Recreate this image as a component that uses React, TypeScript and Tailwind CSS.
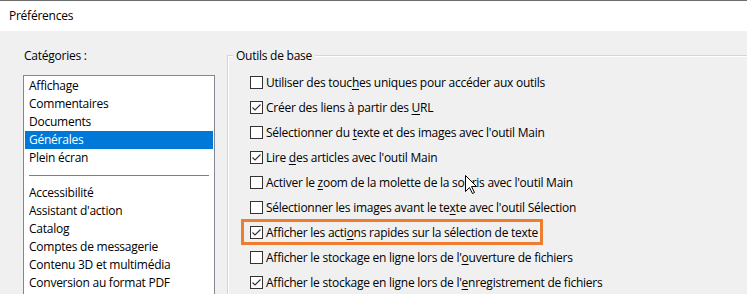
import React from "react"

const font = { fontFamily: '"Segoe UI", "Open Sans", "Noto Sans", sans-serif' }

type Opt = { label: React.ReactNode; checked: boolean; ring?: boolean }

function U({ children }: { children: React.ReactNode }) {
    return <span className="underline underline-offset-[2px] decoration-1">{children}</span>
}

const options: Opt[] = [
    { label: <>Utiliser des touc<U>h</U>es uniques pour accéder aux outils</>, checked: false },
    { label: <>Créer des liens à partir des <U>U</U>RL</>, checked: true },
    { label: <>Sélectionner du <U>t</U>exte et des images avec l'outil Main</>, checked: false },
    { label: <>Lire <U>d</U>es articles avec l'outil Main</>, checked: true },
    { label: <>Activer le <U>z</U>oom de la molette de la souris avec l'outil Main</>, checked: false },
    { label: <>Sélectionner les images avant le te<U>x</U>te avec l'outil Sélection</>, checked: false },
    { label: <>Afficher les acti<U>o</U>ns rapides sur la sélection de texte</>, checked: true, ring: true },
    { label: <>Afficher le stockage en ligne lors de l'<U>o</U>uverture de fichiers</>, checked: false },
    { label: <>Afficher le stockage en ligne lors de l'<U>e</U>nregistrement de fichiers</>, checked: true },
]

const topCats = ["Affichage", "Commentaires", "Documents", "Générales", "Plein écran"]
const moreCats = [
    "Accessibilité",
    "Assistant d'action",
    "Catalog",
    "Comptes de messagerie",
    "Contenu 3D et multimédia",
    "Conversion au format PDF",
]

function Checkbox({ checked }: { checked: boolean }) {
    return (
        <div className="w-[13px] h-[13px] border border-[#333333] bg-white shrink-0">
            {checked && (
                <svg width="11" height="11" viewBox="0 0 11 11">
                    <path d="M1.5 5.5 L4 8 L9.5 2.5" fill="none" stroke="#333" strokeWidth="1.1" />
                </svg>
            )}
        </div>
    )
}

function CatItem({ name }: { name: string }) {
    const sel = name === "Générales"
    return (
        <div
            className={`h-[18px] leading-[18px] pl-[4px] whitespace-nowrap ${
                sel ? "bg-[#0078d7] text-white" : "text-black"
            }`}
        >
            {name}
        </div>
    )
}

export default function App() {
    return (
        <div
            className="relative w-[747px] h-[294px] overflow-hidden bg-[#f0f0f0] text-[12px] tracking-[-0.25px] text-black"
            style={font}
        >
            {/* Title bar */}
            <div className="h-[31px] bg-white border-t border-[#6e6e6e] flex items-center pl-[9px]">
                Préférences
            </div>

            <div className="flex">
                {/* Categories */}
                <div className="w-[227px] shrink-0 pl-[23px] pt-[17px]">
                    <div className="h-[16px] leading-[16px] pl-px">Catégories :</div>
                    <div className="mt-[11px] w-[192px] h-[240px] border border-[#828790] bg-white p-px">
                        {topCats.map((c) => (
                            <CatItem key={c} name={c} />
                        ))}
                        <div className="h-[17px] flex items-center px-[4px]">
                            <div className="h-px w-full bg-[#3a8fd8]" />
                        </div>
                        {moreCats.map((c) => (
                            <CatItem key={c} name={c} />
                        ))}
                    </div>
                </div>

                {/* Outils de base */}
                <div className="relative mt-[24px] flex-1 h-[300px] border-l border-t border-[#d5d5d5] shadow-[inset_1px_1px_0_#ffffff] pl-[22px] pt-[14px]">
                    <span className="absolute -top-[8px] left-[5px] px-[3px] h-[16px] leading-[16px] bg-[#f0f0f0]">
                        Outils de base
                    </span>
                    {options.map((o, i) => (
                        <div key={i} className="relative h-[25px] flex items-center gap-[3px] whitespace-nowrap">
                            <Checkbox checked={o.checked} />
                            <span>{o.label}</span>
                            {o.ring && (
                                <div className="absolute -left-[9px] -top-px w-[302px] h-[26px] border-[3px] border-[#ee7d30]" />
                            )}
                        </div>
                    ))}
                </div>
            </div>

            {/* mouse cursor */}
            <svg className="absolute left-[465px] top-[175px]" width="13" height="20" viewBox="0 0 13 20">
                <path
                    d="M0.5 0.5 L0.5 16.5 L4.5 12.5 L7.5 18.5 L9.5 17.5 L6.5 11.5 L11.5 11.5 Z"
                    fill="#fff"
                    stroke="#000"
                    strokeWidth="1"
                    strokeLinejoin="miter"
                />
            </svg>
        </div>
    )
}
